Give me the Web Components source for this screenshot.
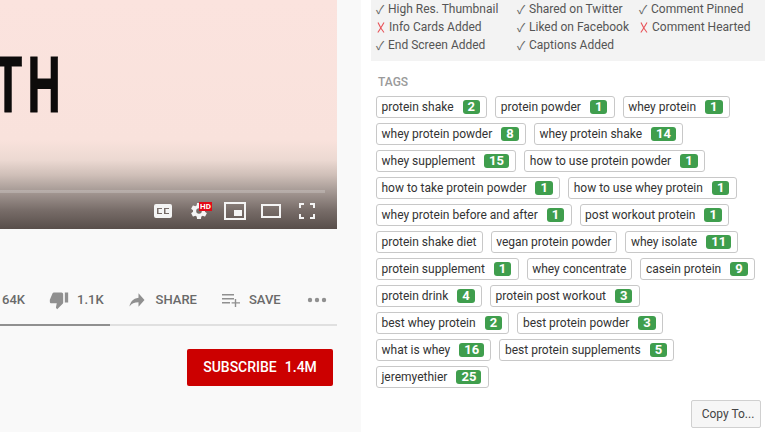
<!DOCTYPE html>
<html>
<head>
<meta charset="utf-8">
<title>Video</title>
<style>
  html, body { margin: 0; height: 432px; overflow: hidden; background: #fff; }
  body { font-family: Roboto, "Liberation Sans", sans-serif; display: flex; width: 775px; }
</style>
</head>
<body>
<watch-column>
  <video-player></video-player>
  <action-bar>
    <action-item style="margin-left:2px">64K</action-item>
    <action-item gap="8" style="margin-left:24px">
      <svg slot="icon" width="20" height="20" viewBox="0 0 24 24"><path fill="#909090" d="M15 3H6c-.83 0-1.54.5-1.84 1.22l-3.02 7.05c-.09.23-.14.47-.14.73v2c0 1.1.9 2 2 2h6.31l-.95 4.57-.03.32c0 .41.17.79.44 1.06L9.83 23l6.59-6.59c.36-.36.58-.86.58-1.41V5c0-1.1-.9-2-2-2zm4 0v12h4V3h-4z"/></svg>
      1.1K</action-item>
    <action-item gap="10" style="margin-left:24px">
      <svg slot="icon" width="18" height="18" viewBox="0 0 24 24"><path fill="#909090" d="M14 9V3l8 9-8 9v-6.1c-5.5 0-9.3 1.8-12 5.6 1.1-5.4 4.4-10.7 12-11.500z"/></svg>
      SHARE</action-item>
    <action-item gap="9" style="margin-left:25px">
      <svg slot="icon" width="18" height="13" viewBox="0 0 18 13"><path fill="#909090" d="M0 0h12v1.400H0zM0 4h12v1.400H0zM0 8h8v1.400H0zM12.800 5h1.400v3.200H18v1.400h-3.800V13h-1.400V9.600H9.600V8.200h3.200z"/></svg>
      SAVE</action-item>
    <svg style="margin-left:26px" width="20" height="6" viewBox="0 0 20 6"><circle cx="3" cy="3" r="2.2" fill="#909090"/><circle cx="10" cy="3" r="2.2" fill="#909090"/><circle cx="17" cy="3" r="2.2" fill="#909090"/></svg>
  </action-bar>
  <sub-button>SUBSCRIBE<span style="margin-left:8px">1.4M</span></sub-button>
</watch-column>
<side-panel>
  <check-grid>
    <check-item>High Res. Thumbnail</check-item>
    <check-item>Shared on Twitter</check-item>
    <check-item>Comment Pinned</check-item>
    <check-item missing>Info Cards Added</check-item>
    <check-item>Liked on Facebook</check-item>
    <check-item missing>Comment Hearted</check-item>
    <check-item>End Screen Added</check-item>
    <check-item>Captions Added</check-item>
  </check-grid>
  <tag-list>
    <tag-chip count="2">protein shake</tag-chip>
    <tag-chip count="1">protein powder</tag-chip>
    <tag-chip count="1">whey protein</tag-chip>
    <tag-chip count="8">whey protein powder</tag-chip>
    <tag-chip count="14">whey protein shake</tag-chip>
    <tag-chip count="15">whey supplement</tag-chip>
    <tag-chip count="1">how to use protein powder</tag-chip>
    <tag-chip count="1">how to take protein powder</tag-chip>
    <tag-chip count="1">how to use whey protein</tag-chip>
    <tag-chip count="1">whey protein before and after</tag-chip>
    <tag-chip count="1">post workout protein</tag-chip>
    <tag-chip>protein shake diet</tag-chip>
    <tag-chip>vegan protein powder</tag-chip>
    <tag-chip count="11">whey isolate</tag-chip>
    <tag-chip count="1">protein supplement</tag-chip>
    <tag-chip>whey concentrate</tag-chip>
    <tag-chip count="9">casein protein</tag-chip>
    <tag-chip count="4">protein drink</tag-chip>
    <tag-chip count="3">protein post workout</tag-chip>
    <tag-chip count="2">best whey protein</tag-chip>
    <tag-chip count="3">best protein powder</tag-chip>
    <tag-chip count="16">what is whey</tag-chip>
    <tag-chip count="5">best protein supplements</tag-chip>
    <tag-chip count="25">jeremyethier</tag-chip>
  </tag-list>
  <copy-button>Copy To...</copy-button>
</side-panel>

<script>
function shadow(el, html) {
  const template = document.createElement("template");
  template.innerHTML = html;
  el.attachShadow({ mode: "open" }).appendChild(template.content.cloneNode(true));
}

customElements.define("watch-column", class extends HTMLElement {
  constructor() {
    super();
    shadow(this, `<style>
      :host { display: block; width: 361px; height: 432px; background: #f9f9f9; flex: none; }
    </style><slot></slot>`);
  }
});

customElements.define("video-player", class extends HTMLElement {
  constructor() {
    super();
    shadow(this, `<style>
      :host { display: block; position: relative; width: 337px; height: 229px; overflow: hidden;
        background: linear-gradient(#fbe3de 0, #f9e2dc 140px, #ecd9d2 160px, #cfbfb8 175px, #a89c97 190px, #786d69 210px, #584e4a 229px); }
      .title { position: absolute; left: -6px; top: 45px; font: bold 80px/1 "Liberation Sans", sans-serif;
        color: #0d0b0b; transform: scaleX(.575); transform-origin: 0 0; letter-spacing: 9.5px; -webkit-text-stroke: 1px #0d0b0b; }
      .progress { position: absolute; left: 0; top: 190px; width: 325px; height: 3px; background: rgba(255,255,255,.2); }
      .ctl { position: absolute; left: 0; top: 199px; width: 337px; height: 24px; display: flex; align-items: center; }
      svg { display: block; flex: none; }
      .gear { position: relative; margin-left: 19px; width: 16px; height: 16px; }
      .hd { position: absolute; left: 8px; top: -1px; width: 13px; height: 9px; background: #e30a17; color: #fff;
        font: bold 8px/9px Roboto, sans-serif; text-align: center; }
    </style>
    <div class="title">TH</div>
    <div class="progress"></div>
    <div class="ctl">
      <svg style="margin-left:154px" width="18" height="14" viewBox="0 0 18 14"><path fill="#f4f4f4" fill-rule="evenodd" d="M2 0h14a2 2 0 0 1 2 2v10a2 2 0 0 1-2 2H2a2 2 0 0 1-2-2V2a2 2 0 0 1 2-2zM8 5V4H3v6h5V9H4.500V5zM15 5V4h-5v6h5V9h-3.500V5z"/></svg>
      <div class="gear">
        <svg width="16" height="16" viewBox="2 2 20 20"><path fill="#f4f4f4" d="M19.400 13c.04-.33.06-.66.06-1s-.02-.67-.06-1l2.100-1.640c.19-.15.24-.42.12-.64l-2-3.460c-.12-.22-.38-.3-.6-.22l-2.490 1c-.52-.4-1.080-.73-1.690-.98l-.38-2.650A.49.490 0 0 0 14 2h-4c-.25 0-.46.18-.49.420l-.38 2.650c-.61.25-1.170.59-1.690.98l-2.490-1c-.23-.09-.49 0-.61.22l-2 3.460c-.13.220-.07.490.12.640L4.570 11c-.04.330-.07.660-.07 1s.03.67.07 1l-2.110 1.640c-.19.150-.24.420-.12.640l2 3.460c.12.220.38.300.61.220l2.490-1c.52.400 1.080.730 1.690.980l.38 2.650c.03.240.24.420.49.420h4c.25 0 .46-.18.49-.42l.38-2.650c.61-.25 1.170-.59 1.690-.98l2.490 1c.23.090.49 0 .61-.22l2-3.460c.12-.22.070-.49-.12-.64zM12 15.500a3.500 3.500 0 1 1 0-7 3.500 3.500 0 0 1 0 7z"/></svg>
        <div class="hd">HD</div>
      </div>
      <svg style="margin-left:17px" width="22" height="18" viewBox="0 0 22 18"><path fill="#f4f4f4" fill-rule="evenodd" d="M0 0h22v18H0zM2 2v14h18V2zM10 8h8v6h-8z"/></svg>
      <svg style="margin-left:15px" width="20" height="14" viewBox="0 0 20 14"><path fill="#f4f4f4" fill-rule="evenodd" d="M0 0h20v14H0zM2 2v10h16V2z"/></svg>
      <svg style="margin-left:18px" width="16" height="16" viewBox="0 0 16 16"><path fill="#f4f4f4" d="M0 0h5v2H2v3H0zM11 0h5v5h-2V2h-3zM0 11h2v3h3v2H0zM14 11h2v5h-5v-2h3z"/></svg>
    </div>`);
  }
});

customElements.define("action-bar", class extends HTMLElement {
  constructor() {
    super();
    shadow(this, `<style>
      :host { display: block; position: relative; width: 337px; height: 97px; box-sizing: border-box; }
      .row { display: flex; align-items: center; height: 22px; padding-top: 60px; }
      .line { height: 2px; margin-top: 13px; background: linear-gradient(90deg, #909090 110px, #e0e0e0 110px); }
    </style><div class="row"><slot></slot></div><div class="line"></div>`);
  }
});

customElements.define("action-item", class extends HTMLElement {
  constructor() {
    super();
    const gap = this.getAttribute("gap") || 0;
    shadow(this, `<style>
      :host { display: flex; align-items: center; font: 500 13px/22px Roboto, sans-serif; color: #6a6a6a; }
      ::slotted(svg) { display: block; margin-right: ${gap}px; }
    </style><slot name="icon"></slot><slot></slot>`);
  }
});

customElements.define("sub-button", class extends HTMLElement {
  constructor() {
    super();
    shadow(this, `<style>
      :host { display: block; width: 146px; height: 37px; margin: 23px 0 0 187px; border-radius: 2px; background: #cc0000;
        color: #fff; font: 500 14px/37px Roboto, sans-serif; text-align: center; }
    </style><slot></slot>`);
  }
});

customElements.define("side-panel", class extends HTMLElement {
  constructor() {
    super();
    shadow(this, `<style>
      :host { display: block; width: 404px; padding-left: 10px; box-sizing: border-box; background: #fff; }
    </style><slot></slot>`);
  }
});

customElements.define("check-grid", class extends HTMLElement {
  constructor() {
    super();
    shadow(this, `<style>
      :host { display: grid; grid-template-columns: 141px 122px auto; grid-auto-rows: 18px; align-content: start;
        width: 394px; height: 61px; box-sizing: border-box; padding: 0 0 0 5px; background: #f3f3f3; }
    </style><slot></slot>`);
  }
});

customElements.define("check-item", class extends HTMLElement {
  constructor() {
    super();
    const missing = this.hasAttribute("missing");
    const mark = missing
      ? `<svg class="x" width="8" height="11" viewBox="0 0 8 11"><path fill="none" stroke="#e8545a" stroke-width="1.100" d="M1 .5c1.500 3.500 3.500 7 6 10M7 .5C5 4 3 7.500 .8 10.500"/></svg>`
      : `<span class="m">\u2713</span>`;
    shadow(this, `<style>
      :host { display: flex; font: 12px/18px Roboto, sans-serif; color: #555; white-space: nowrap; }
      .m { width: 12px; color: #666; font-family: "Noto Sans CJK JP", "DejaVu Sans", sans-serif; }
      .x { display: block; flex: none; margin: 4px 4px 0 1px; }
    </style>${mark}<slot></slot>`);
  }
});

customElements.define("tag-list", class extends HTMLElement {
  constructor() {
    super();
    shadow(this, `<style>
      :host { display: block; margin-top: 14px; width: 385px; padding-left: 5px; }
      .label { font: 500 12px/14px Roboto, sans-serif; color: #9a9a9a; margin: 0 0 7px 2px; }
      .wrap { display: flex; flex-wrap: wrap; gap: 5px 8px; }
    </style><div class="label">TAGS</div><div class="wrap"><slot></slot></div>`);
  }
});

customElements.define("tag-chip", class extends HTMLElement {
  constructor() {
    super();
    const count = this.getAttribute("count");
    shadow(this, `<style>
      :host { display: flex; align-items: center; height: 22px; box-sizing: border-box; padding: 0 4.500px;
        border: 1px solid #c8c8c8; border-radius: 3px; background: #fff; color: #333; font: 12px/20px Roboto, sans-serif; white-space: nowrap; }
      :host(:not([count])) { padding-right: 5.200px; }
      .n { margin: 0 1.800px 0 9px; min-width: 6px; padding: 0 5px; height: 14px; border-radius: 3px; background: #3f9e4d; color: #fff;
        font: bold 13px/14px Roboto, sans-serif; text-align: center; }
    </style><slot></slot>${count ? `<span class="n">${count}</span>` : ""}`);
  }
});

customElements.define("copy-button", class extends HTMLElement {
  constructor() {
    super();
    shadow(this, `<style>
      :host { display: block; width: 70px; height: 28px; margin: 12px 0 0 320px; padding-left: 4px; border: 1px solid #d0d0d0; border-radius: 2px;
        background: #f6f6f6; color: #444; font: 12px/26px Roboto, sans-serif; text-align: center; box-sizing: border-box; }
    </style><slot></slot>`);
  }
});
</script>
</body>
</html>
